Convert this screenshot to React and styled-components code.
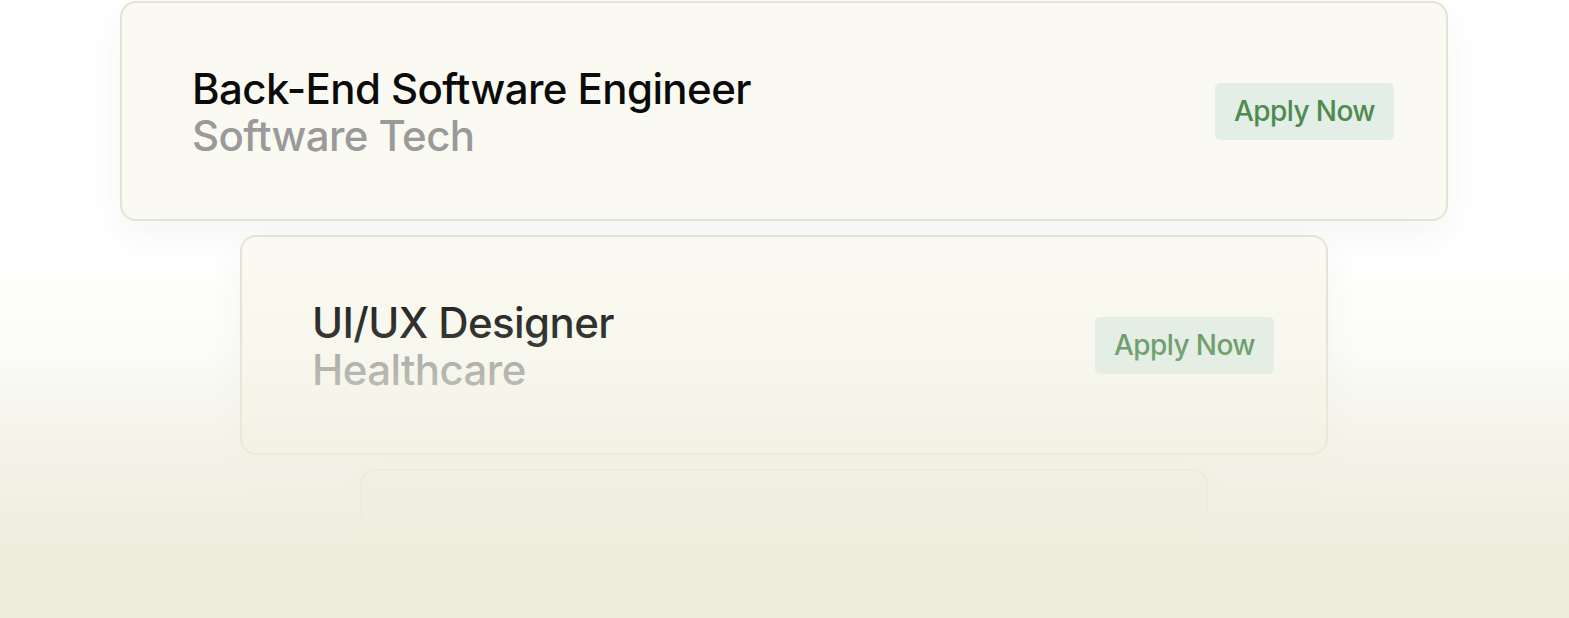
import React from "react";
import styled, { createGlobalStyle } from "styled-components";

const GlobalStyle = createGlobalStyle`
  html, body {
    margin: 0;
    padding: 0;
    background: #ffffff;
  }
  body {
    font-family: Inter, "Noto Sans", sans-serif;
    -webkit-font-smoothing: antialiased;
  }
`;

const Page = styled.div`
  position: relative;
  height: 618px;
  overflow: hidden;
  background: #ffffff;

  &::after {
    content: "";
    position: absolute;
    inset: 0;
    pointer-events: none;
    background: linear-gradient(
      180deg,
      rgba(238, 238, 223, 0) 0px,
      rgba(238, 238, 223, 0) 250px,
      rgba(238, 238, 223, 0.22) 350px,
      rgba(238, 238, 223, 0.8) 470px,
      rgba(238, 238, 223, 1) 545px,
      rgba(238, 238, 223, 1) 100%
    );
  }
`;

const Stack = styled.div`
  display: flex;
  flex-direction: column;
  align-items: center;
  gap: 14px;
  padding: 1px 1px 0 0;
`;

const Card = styled.div`
  box-sizing: border-box;
  width: ${(p) => p.$width}px;
  height: 220px;
  flex-shrink: 0;
  display: flex;
  align-items: center;
  justify-content: space-between;
  padding: 0 52px 0 70px;
  background: #fafaf2;
  border: 2px solid #e3e3d5;
  border-radius: 16px;
  box-shadow: 0 14px 36px rgba(60, 60, 40, 0.05);
`;

const Info = styled.div`
  display: flex;
  flex-direction: column;
  padding-top: 2px;
`;

const Role = styled.div`
  font-size: 42px;
  line-height: 47px;
  font-weight: 500;
  letter-spacing: -0.014em;
  color: #0b0b0b;
`;

const Company = styled.div`
  font-size: 42px;
  line-height: 47px;
  font-weight: 500;
  letter-spacing: -0.014em;
  color: #9a9a9a;
`;

const ApplyButton = styled.button`
  box-sizing: border-box;
  height: 57px;
  padding: 0 19px;
  border: none;
  border-radius: 5px;
  background: #e2eee6;
  color: #4f8a4f;
  font-family: Inter, "Noto Sans", sans-serif;
  font-size: 28px;
  font-weight: 500;
  letter-spacing: -0.02em;
  cursor: pointer;
`;

const jobs = [
  { role: "Back-End Software Engineer", company: "Software Tech", width: 1328 },
  { role: "UI/UX Designer", company: "Healthcare", width: 1088 },
  { role: null, company: null, width: 848 },
];

export default function App() {
  return (
    <>
      <GlobalStyle />
      <Page>
        <Stack>
          {jobs.map((job) => (
            <Card key={job.width} $width={job.width}>
              {job.role && (
                <>
                  <Info>
                    <Role>{job.role}</Role>
                    <Company>{job.company}</Company>
                  </Info>
                  <ApplyButton>Apply Now</ApplyButton>
                </>
              )}
            </Card>
          ))}
        </Stack>
      </Page>
    </>
  );
}
